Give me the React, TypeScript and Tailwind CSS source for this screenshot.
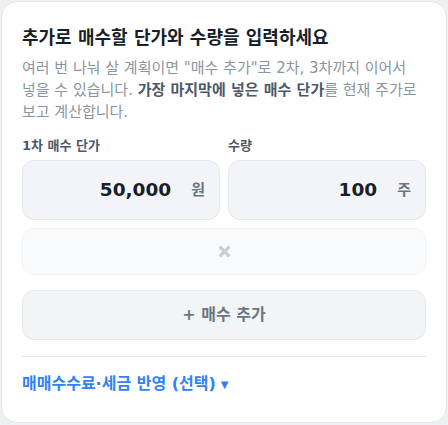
export default function App() {
  return (
    <div
      className="min-h-[425px] bg-[#eef0f3] p-px"
      style={{ fontFamily: '"DejaVu Sans", "Noto Sans CJK KR", sans-serif' }}
    >
      <div className="rounded-2xl border border-[#e3e6ea] bg-white px-5 pt-[22px] pb-[26px]">
        <h2 className="text-[18px] font-bold leading-7 text-[#191f28]">
          추가로 매수할 단가와 수량을 입력하세요
        </h2>
        <p className="mt-[5px] break-keep text-[15px] leading-[22px] text-[#8b95a1]">
          여러 번 나눠 살 계획이면 "매수 추가"로 2차, 3차까지 이어서 넣을 수 있습니다.{" "}
          <b className="font-bold text-[#4e5968]">가장 마지막에 넣은 매수 단가</b>를 현재
          주가로 보고 계산합니다.
        </p>

        <div className="mt-[13px] grid grid-cols-2 gap-2">
          {[
            { label: "1차 매수 단가", value: "50,000", unit: "원" },
            { label: "수량", value: "100", unit: "주" },
          ].map((f) => (
            <label key={f.label} className="flex flex-col">
              <span className="text-[13px] font-bold leading-5 text-[#4e5968]">{f.label}</span>
              <div className="mt-1 flex h-[60px] items-center justify-end gap-5 rounded-xl border border-[#e5e8eb] bg-[#f2f4f8] pr-[14px]">
                <span className="text-[18.5px] font-bold text-[#191f28]">{f.value}</span>
                <span className="text-[15px] font-semibold text-[#6b7684]">{f.unit}</span>
              </div>
            </label>
          ))}
        </div>

        <button className="mt-2 flex h-[47px] w-full items-center justify-center rounded-xl border border-[#f0f2f4] bg-[#f9fafb]">
          <svg width="13" height="13" viewBox="0 0 12 12" className="text-[#c9ced6]">
            <path d="M1.5 1.5L10.5 10.5M10.5 1.5L1.5 10.5" stroke="currentColor" strokeWidth="3" />
          </svg>
        </button>

        <button className="mt-[15px] flex h-[50px] w-full items-center justify-center rounded-xl border border-[#e5e8eb] bg-[#f2f4f6] text-[16px] font-bold text-[#6b7684]">
          + 매수 추가
        </button>

        <div className="mt-4 border-t border-[#e5e8eb]" />

        <button className="mt-[15px] flex items-center gap-[5px] text-[16px] font-bold text-[#3182f6]">
          매매수수료·세금 반영 (선택)
          <span className="text-[10px]">▼</span>
        </button>
      </div>
    </div>
  );
}
